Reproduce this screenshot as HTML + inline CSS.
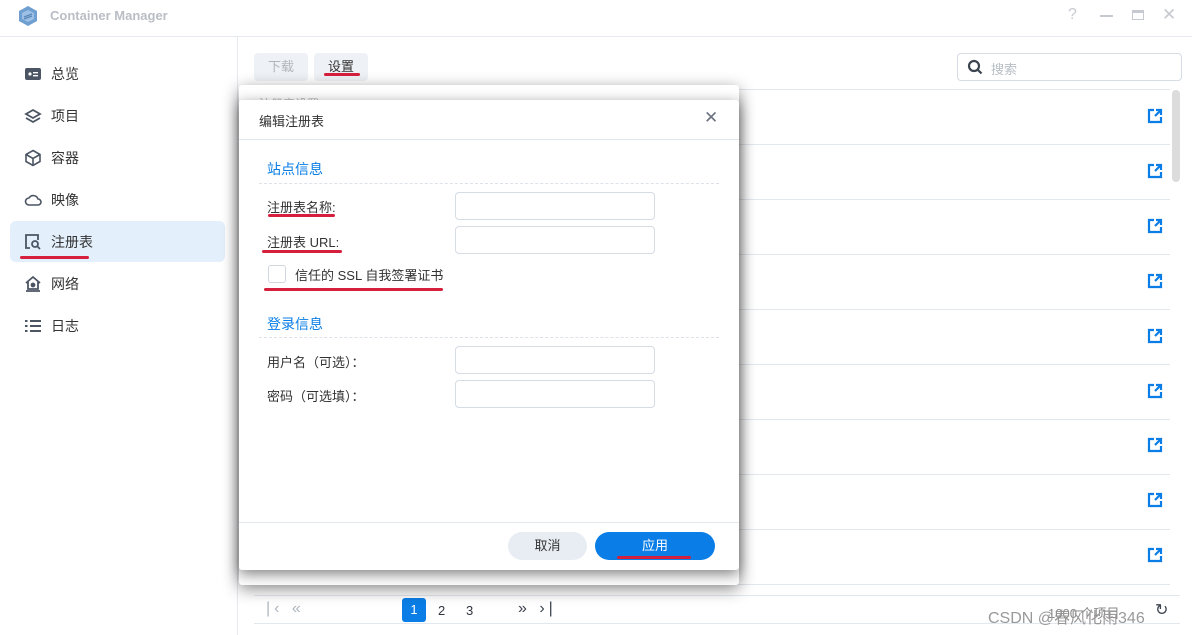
<!DOCTYPE html>
<html><head><meta charset="utf-8"><style>
*{box-sizing:border-box;margin:0;padding:0}
body{width:1192px;height:635px;overflow:hidden;background:#fff;font-family:"Liberation Sans","Noto Sans CJK SC",sans-serif;font-size:13px;color:#2f3640;position:relative}
.abs{position:absolute}
.nav{position:absolute;left:10px;width:215px;height:41px;display:flex;align-items:center;padding-left:14px;font-size:14px;color:#333}
.nav svg{margin-right:9px}
.row{position:absolute;left:254px;width:916px;border-top:1px solid #e3e8ee}
.ext{position:absolute;left:1147px;width:16px;height:16px}
.red{position:absolute;height:3px;background:#d61f3c;border-radius:2px}
.inp{position:absolute;left:455px;width:200px;height:28px;border:1px solid #d5dce4;border-radius:4px;background:#fff}
.lbl{position:absolute;left:267px;font-size:13px;color:#333}
</style></head><body>
<svg class="abs" style="left:17px;top:5px" width="22" height="22" viewBox="0 0 22 22"><polygon points="11,1 20,6 20,16 11,21 2,16 2,6" fill="#6f9fd0"/><polygon points="11,5 17,8 17,14 11,17 5,14 5,8" fill="#9cc0e6"/><path d="M7 12l8-3M7 14l8-3" stroke="#5a86b8" stroke-width="1.3"/></svg>
<div class="abs" style="left:50px;top:8px;font-size:13px;font-weight:bold;color:#b9bec5">Container Manager</div>
<div class="abs" style="left:1068px;top:6px;color:#c6cad0;font-size:16px">?</div>
<div class="abs" style="left:1100px;top:15px;width:13px;height:2px;background:#c6cad0"></div>
<div class="abs" style="left:1132px;top:10px;width:12px;height:10px;border:1.5px solid #c6cad0;border-top-width:3px"></div>
<div class="abs" style="left:1162px;top:5px;color:#c6cad0;font-size:17px">✕</div>
<div class="abs" style="left:0;top:36px;width:1192px;height:1px;background:#e6eaef"></div>
<div class="abs" style="left:237px;top:37px;width:1px;height:598px;background:#e6eaef"></div>
<div class="nav" style="top:53px"><svg width="18" height="16"><rect x="1" y="2" width="16" height="12" rx="2" fill="#4b5563"/><circle cx="6" cy="8" r="1.6" fill="#fff"/><rect x="9" y="6" width="5" height="1.4" fill="#fff"/><rect x="9" y="9" width="5" height="1.4" fill="#fff"/></svg>总览</div>
<div class="nav" style="top:95px"><svg width="18" height="16" fill="none" stroke="#4b5563" stroke-width="1.8"><path d="M9 2l7 4-7 4-7-4z"/><path d="M2 10l7 4 7-4"/></svg>项目</div>
<div class="nav" style="top:137px"><svg width="18" height="18" fill="none" stroke="#4b5563" stroke-width="1.6"><path d="M9 1.5l7 4v7l-7 4-7-4v-7z"/><path d="M2 5.5l7 4 7-4M9 9.5v7"/></svg>容器</div>
<div class="nav" style="top:179px"><svg width="18" height="14" fill="none" stroke="#4b5563" stroke-width="1.6"><path d="M5 12h9a3 3 0 0 0 0-6 5 5 0 0 0-9-1 3.5 3.5 0 0 0 0 7z"/></svg>映像</div>
<div class="nav" style="top:221px;background:#e3effb;border-radius:6px"><svg width="18" height="17" fill="none" stroke="#4b5563" stroke-width="1.8"><path d="M6 15H2V2h12v5"/><circle cx="11" cy="11" r="3"/><path d="M13 13l3 3"/></svg>注册表</div>
<div class="red" style="left:20px;top:256px;width:69px"></div>
<div class="nav" style="top:263px"><svg width="18" height="17" fill="none" stroke="#4b5563" stroke-width="1.8"><path d="M2 8l7-6 7 6M4 7v7h10V7M2 16h14"/><circle cx="9" cy="10" r="1.5" fill="#4b5563"/></svg>网络</div>
<div class="nav" style="top:305px"><svg width="18" height="14" fill="#4b5563"><rect x="1" y="1" width="2.5" height="2"/><rect x="6" y="1" width="11" height="2"/><rect x="1" y="6" width="2.5" height="2"/><rect x="6" y="6" width="11" height="2"/><rect x="1" y="11" width="2.5" height="2"/><rect x="6" y="11" width="11" height="2"/></svg>日志</div>
<div class="abs" style="left:254px;top:53px;width:54px;height:28px;background:#eef1f5;border-radius:4px;color:#b0b6bd;font-size:13px;text-align:center;line-height:28px">下载</div>
<div class="abs" style="left:314px;top:53px;width:54px;height:28px;background:#eef1f5;border-radius:4px;color:#333;font-size:13px;text-align:center;line-height:28px">设置</div>
<div class="red" style="left:324px;top:73px;width:36px"></div>
<div class="abs" style="left:957px;top:53px;width:225px;height:28px;border:1px solid #d5dce4;border-radius:4px"></div>
<svg class="abs" style="left:967px;top:59px" width="16" height="16" fill="none" stroke="#3c4450" stroke-width="2.2"><circle cx="7" cy="7" r="5"/><path d="M11 11l3.5 3.5"/></svg>
<div class="abs" style="left:991px;top:59px;color:#b8bec5;font-size:13px">搜索</div>
<div class="row" style="top:89px"></div>
<div class="row" style="top:144px"></div><div class="row" style="top:199px"></div><div class="row" style="top:254px"></div><div class="row" style="top:309px"></div><div class="row" style="top:364px"></div><div class="row" style="top:419px"></div><div class="row" style="top:474px"></div><div class="row" style="top:529px"></div><div class="row" style="top:584px"></div>
<div class="abs" style="left:1172px;top:90px;width:8px;height:92px;background:#dcdcdc;border-radius:4px"></div>
<svg width="0" height="0" style="position:absolute"><defs><g id="ex"><path d="M7 2H2v12h12V9" fill="none" stroke="#0a7ee6" stroke-width="2.2"/><path d="M8 8l6-6M9 2h5v5" fill="none" stroke="#0a7ee6" stroke-width="2.2"/></g></defs></svg>
<svg class="ext" style="top:108px"><use href="#ex"/></svg><svg class="ext" style="top:163px"><use href="#ex"/></svg><svg class="ext" style="top:218px"><use href="#ex"/></svg><svg class="ext" style="top:273px"><use href="#ex"/></svg><svg class="ext" style="top:328px"><use href="#ex"/></svg><svg class="ext" style="top:383px"><use href="#ex"/></svg><svg class="ext" style="top:437px"><use href="#ex"/></svg><svg class="ext" style="top:492px"><use href="#ex"/></svg><svg class="ext" style="top:547px"><use href="#ex"/></svg>
<div class="abs" style="left:254px;top:595px;width:926px;height:1px;background:#e3e8ee"></div>
<div class="abs" style="left:254px;top:623px;width:926px;height:1px;background:#e3e8ee"></div>
<div class="abs" style="left:266px;top:600px;color:#b0b6bd;font-size:16px;letter-spacing:4px">|‹ «</div>
<div class="abs" style="left:402px;top:598px;width:24px;height:24px;background:#0a7ee6;border-radius:3px;color:#fff;text-align:center;line-height:24px">1</div>
<div class="abs" style="left:438px;top:603px">2</div><div class="abs" style="left:466px;top:603px">3</div>
<div class="abs" style="left:518px;top:600px;color:#3c4450;font-size:16px;letter-spacing:4px">» ›|</div>
<div class="abs" style="left:1048px;top:603px;color:#888">1000 个项目</div>
<div class="abs" style="left:1155px;top:600px;color:#3c4450;font-size:16px">↻</div>
<div class="abs" style="left:988px;top:604px;color:#999;font-size:16px">CSDN @春风化雨346</div>
<div class="abs" style="left:239px;top:85px;width:500px;height:500px;background:#fff;border-radius:3px;box-shadow:0 4px 16px rgba(0,0,0,.45)"></div>
<div class="abs" style="left:259px;top:95px;color:#bbb;font-size:12px">注册表设置</div>
<div class="abs" style="left:239px;top:100px;width:500px;height:470px;background:#fff;border-radius:3px;box-shadow:0 4px 14px rgba(0,0,0,.5)"></div>
<div class="abs" style="left:259px;top:111px;font-size:13px;color:#333">编辑注册表</div>
<div class="abs" style="left:704px;top:108px;font-size:17px;color:#6b7280">✕</div>
<div class="abs" style="left:239px;top:139px;width:500px;height:1px;background:#e3e8ee"></div>
<div class="abs" style="left:267px;top:159px;font-size:14px;color:#0a7ee6">站点信息</div>
<div class="abs" style="left:259px;top:183px;width:460px;border-top:1px dashed #dde2e8"></div>
<div class="lbl" style="top:197px">注册表名称:</div>
<div class="red" style="left:268px;top:214px;width:67px"></div>
<div class="inp" style="top:192px"></div>
<div class="lbl" style="top:232px">注册表 URL:</div>
<div class="red" style="left:262px;top:250px;width:80px"></div>
<div class="inp" style="top:226px"></div>
<div class="abs" style="left:268px;top:265px;width:18px;height:18px;border:1px solid #d0d7df;border-radius:3px"></div>
<div class="abs" style="left:295px;top:265px;font-size:13px;color:#333">信任的 SSL 自我签署证书</div>
<div class="red" style="left:264px;top:288px;width:179px"></div>
<div class="abs" style="left:267px;top:314px;font-size:14px;color:#0a7ee6">登录信息</div>
<div class="abs" style="left:259px;top:337px;width:460px;border-top:1px dashed #dde2e8"></div>
<div class="lbl" style="top:352px">用户名（可选）：</div>
<div class="inp" style="top:346px"></div>
<div class="lbl" style="top:386px">密码（可选填）：</div>
<div class="inp" style="top:380px"></div>
<div class="abs" style="left:239px;top:522px;width:500px;height:1px;background:#e3e8ee"></div>
<div class="abs" style="left:508px;top:532px;width:79px;height:28px;background:#e8edf3;border-radius:14px;text-align:center;line-height:28px;color:#333">取消</div>
<div class="abs" style="left:595px;top:532px;width:120px;height:28px;background:#0a7ee6;border-radius:14px;text-align:center;line-height:28px;color:#fff">应用</div>
<div class="red" style="left:617px;top:556px;width:74px"></div>
</body></html>
